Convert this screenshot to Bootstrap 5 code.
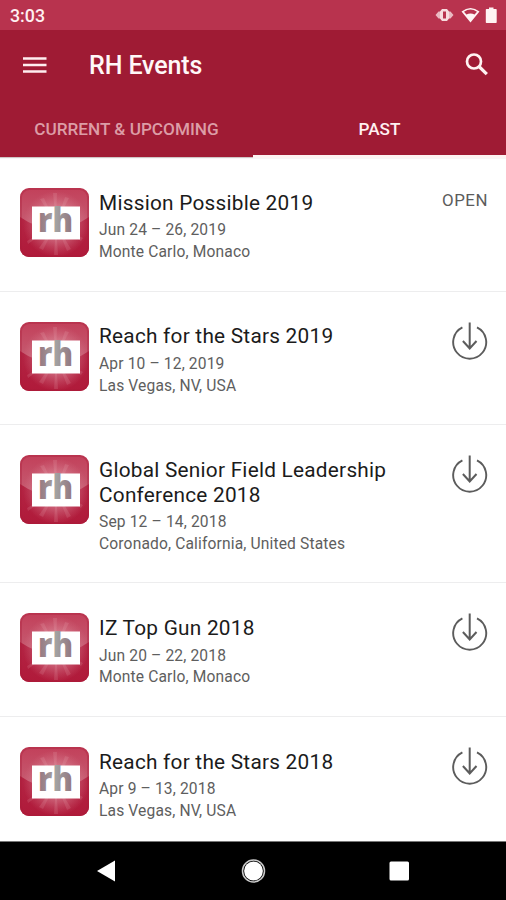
<!DOCTYPE html>
<html lang="en">
<head>
<meta charset="utf-8">
<meta name="viewport" content="width=device-width, initial-scale=1">
<title>RH Events</title>
<link href="https://cdn.jsdelivr.net/npm/bootstrap@5.3.0/dist/css/bootstrap.min.css" rel="stylesheet">
<style>
  body { font-family: Roboto, "Liberation Sans", sans-serif; height: 900px; color: #222; }
  svg { display: block; }
  .status { height: 30px; background: #b8334e; padding: 2px 8px 0 10px; font-size: 17.8px; font-weight: 500; color: #fff0f1; }
  .appbar { height: 71px; background: #9f1b34; padding: 0 17px 0 23px; }
  .app-title { font-size: 25px; font-weight: 500; color: #fff8f8; margin: 1px 0 0 42px; line-height: 30px; letter-spacing: -.1px; }
  .tabs { height: 56px; background: #9f1b34; box-shadow: 0 1px 1px #cfc6c6; margin-bottom: 1px; }
  .tabs .tab { font-size: 17.2px; font-weight: 500; line-height: 56px; color: #dc9da6; text-decoration: none; border-bottom: 3px solid transparent; height: 57px; }
  .tabs .tab.current { color: #fff0f0; border-bottom-color: #fdf3f2; }
  .event { padding: 30px 18px 29px 20px; border: 0; border-bottom: 1px solid #ededee; height: 133.6px; }
  .event.tall { height: 158.3px; }
  .event:last-child { height: 125px; border-bottom: 0; }
  .event-name { font-size: 20.8px; line-height: 25px; font-weight: 400; letter-spacing: .24px; margin: 2.700px 0 4.600px; color: #1b1b1b; }
  .event-info { font-size: 15.6px; line-height: 21.7px; letter-spacing: .14px; color: #5e5e5e; }
  .event-text { margin-left: 10px; }
  .open-btn { font-size: 16.9px; line-height: 25px; letter-spacing: .5px; color: #5c5c5c; }
  .navkeys { height: 59px; background: #000; border-top: 1px solid #777; }
</style>
<script src="https://cdn.jsdelivr.net/npm/bootstrap@5.3.0/dist/js/bootstrap.bundle.min.js"></script>
</head>
<body class="bg-white overflow-hidden d-flex flex-column">
<svg width="0" height="0" class="position-absolute" aria-hidden="true">
  <defs>
    <linearGradient id="tileFill" x1="0" y1="0" x2="0" y2="1">
      <stop offset="0" stop-color="#c2405a"/><stop offset=".5" stop-color="#c65a70"/><stop offset="1" stop-color="#c04a62"/>
    </linearGradient>
    <linearGradient id="tileShade" x1="0" y1="0" x2="0" y2="1">
      <stop offset="0" stop-color="#b32443"/><stop offset="1" stop-color="#b01a3a"/>
    </linearGradient>
    <radialGradient id="tileGlow"><stop offset=".3" stop-color="#eeb8c2" stop-opacity=".6"/><stop offset="1" stop-color="#e08b9b" stop-opacity="0"/></radialGradient>
    <linearGradient id="letterFill" x1="0" y1="0" x2="1" y2="0">
      <stop offset="0" stop-color="#96757e"/><stop offset=".5" stop-color="#a3a3a3"/><stop offset="1" stop-color="#92747c"/>
    </linearGradient>
    <clipPath id="tileClip"><rect width="69" height="69" rx="9"/></clipPath>
    <symbol id="logo" viewBox="0 0 69 69">
      <g clip-path="url(#tileClip)">
        <rect width="69" height="69" fill="url(#tileFill)"/>
        <path d="M0 29Q34.500 53 69 29V69H0z" fill="url(#tileShade)"/>
        <circle cx="36" cy="36" r="33" fill="url(#tileGlow)"/>
        <path d="M36 36 33 5h4zM36 36 45 9l4 1zM36 36 20 11l4-1zM36 36 34 67h4zM36 36 47 63l4-2zM36 36 19 60l4 2zM36 36 7 53l1 3zM36 36 63 50l-2 3z" fill="#f3c4cc" opacity=".15"/>
        <rect x="1" y="1" width="67" height="67" rx="8.500" fill="none" stroke="#a91c39" stroke-opacity=".35" stroke-width="2"/>
      </g>
      <rect x="12" y="18.500" width="48" height="33" fill="#fff"/>
      <text x="18" y="44" font-family="Open Sans, sans-serif" font-size="33" font-weight="800" textLength="35" lengthAdjust="spacingAndGlyphs" fill="url(#letterFill)">rh</text>
    </symbol>
    <symbol id="download" viewBox="0 0 36 38">
      <path d="M10.400 5.400A16.500 16.500 0 1 0 25 5.400" fill="none" stroke="#5c5c5c" stroke-width="1.900"/>
      <path d="M17.700 .5V26.500M10.900 19l6.800 7.500 6.800-7.500" fill="none" stroke="#5c5c5c" stroke-width="2"/>
    </symbol>
  </defs>
</svg>

<header>
  <div class="status d-flex align-items-center justify-content-between">
    <span>3:03</span>
    <svg width="64" height="20" viewBox="0 0 64 20" fill="#fff3f3">
      <path d="M8 3h5l2 2.500v7L13 15H8l-2-2.500v-7zM9 5.500v7h3v-7z" fill-rule="evenodd" opacity=".88"/>
      <path d="M6 5.500v7H4.500L1.500 9l3-3.500zM15 5.500v7h1.500l3-3.500-3-3.500z" opacity=".7"/>
      <path fill-rule="evenodd" d="M27.500 5.500Q36.500-1.500 45.500 5.500L36.500 16.500zM30 5.700l2.400 2.700Q36.500 6.700 40.600 8.400L43 5.700Q36.500 1.500 30 5.700z"/>
      <path d="M55 1.500h4.500V3H62q.7 0 .7.700v12.600q0 .7-.7.700h-9.500q-.7 0-.7-.7V3.700q0-.7.700-.7H55z"/>
    </svg>
  </div>
  <nav class="appbar d-flex align-items-center" aria-label="Application">
    <svg width="24" height="18" viewBox="0 0 24 18"><path d="M0 1.500h23.500M0 8h23.500M0 14.500h23.500" stroke="#ffeeef" stroke-width="2.700"/></svg>
    <h1 class="app-title">RH Events</h1>
    <svg class="ms-auto mb-1" width="24" height="24" viewBox="0 0 24 24" fill="none" stroke="#fff3f2" stroke-width="2.700"><circle cx="9" cy="9.500" r="7"/><path d="m14 14.500 7.800 7.600" stroke-width="3.200"/></svg>
  </nav>
  <nav class="tabs d-flex text-center position-relative" aria-label="Event period">
    <a class="tab col-6" href="#">CURRENT &amp; UPCOMING</a>
    <a class="tab current col-6" href="#">PAST</a>
  </nav>
</header>

<main class="list-group list-group-flush flex-grow-1 overflow-hidden">
  <article class="event d-flex align-items-start">
    <svg class="flex-shrink-0" width="69" height="69"><use href="#logo"/></svg>
    <div class="event-text flex-grow-1"><h2 class="event-name">Mission Possible 2019</h2><div class="event-info">Jun 24 – 26, 2019<br>Monte Carlo, Monaco</div></div>
    <span class="open-btn">OPEN</span>
  </article>
  <article class="event d-flex align-items-start">
    <svg class="flex-shrink-0" width="69" height="69"><use href="#logo"/></svg>
    <div class="event-text flex-grow-1"><h2 class="event-name">Reach for the Stars 2019</h2><div class="event-info">Apr 10 – 12, 2019<br>Las Vegas, NV, USA</div></div>
    <svg class="flex-shrink-0" width="36" height="38"><use href="#download"/></svg>
  </article>
  <article class="event tall d-flex align-items-start">
    <svg class="flex-shrink-0" width="69" height="69"><use href="#logo"/></svg>
    <div class="event-text flex-grow-1"><h2 class="event-name">Global Senior Field Leadership<br>Conference 2018</h2><div class="event-info">Sep 12 – 14, 2018<br>Coronado, California, United States</div></div>
    <svg class="flex-shrink-0" width="36" height="38"><use href="#download"/></svg>
  </article>
  <article class="event d-flex align-items-start">
    <svg class="flex-shrink-0" width="69" height="69"><use href="#logo"/></svg>
    <div class="event-text flex-grow-1"><h2 class="event-name">IZ Top Gun 2018</h2><div class="event-info">Jun 20 – 22, 2018<br>Monte Carlo, Monaco</div></div>
    <svg class="flex-shrink-0" width="36" height="38"><use href="#download"/></svg>
  </article>
  <article class="event d-flex align-items-start">
    <svg class="flex-shrink-0" width="69" height="69"><use href="#logo"/></svg>
    <div class="event-text flex-grow-1"><h2 class="event-name">Reach for the Stars 2018</h2><div class="event-info">Apr 9 – 13, 2018<br>Las Vegas, NV, USA</div></div>
    <svg class="flex-shrink-0" width="36" height="38"><use href="#download"/></svg>
  </article>
</main>

<footer class="navkeys flex-shrink-0 d-flex align-items-center justify-content-center">
  <svg width="316" height="26" viewBox="0 0 316 26" fill="#fff">
    <path d="M2 13 20 2.500v21z"/>
    <circle cx="158.500" cy="13" r="11" stroke="#ccc" stroke-width="1.500" fill="none"/><circle cx="158.500" cy="13" r="9.400"/>
    <rect x="294.500" y="3.500" width="19.500" height="19" rx="1.500"/>
  </svg>
</footer>
</body>
</html>
